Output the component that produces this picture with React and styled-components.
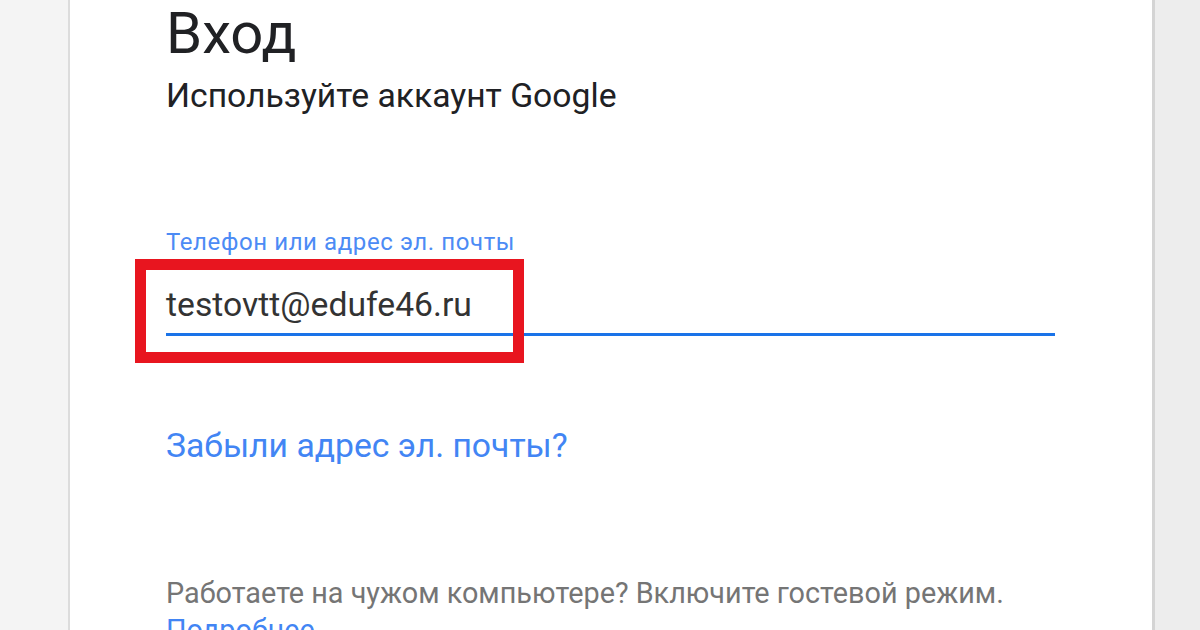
import React from 'react'
import styled, { createGlobalStyle } from 'styled-components'

const GlobalStyle = createGlobalStyle`
  html, body {
    margin: 0;
    height: 100%;
    background: #f1f1f1;
    font-family: Roboto, "Liberation Sans", Arial, sans-serif;
    overflow: hidden;
  }
`

const Page = styled.div`
  display: flex;
  height: 630px;
`

const Gutter = styled.div`
  width: ${p => p.$width}px;
  flex: none;
  background: ${p => p.$bg};
`

const Card = styled.main`
  flex: none;
  width: 1087px;
  box-sizing: border-box;
  background: #fff;
  border-left: 2px solid #dcdcdc;
  border-right: 3px solid #d4d4d4;
  padding: 4px 97px 0 96px;
  overflow: hidden;
`

const Title = styled.h1`
  margin: 0;
  font-size: 58px;
  line-height: 58px;
  font-weight: 400;
  color: #202124;
`

const Subtitle = styled.p`
  margin: 16.6px 0 0;
  font-size: 33.7px;
  line-height: 33.7px;
  color: #202124;
`

const Field = styled.div`
  position: relative;
  margin-top: 117.5px;
`

const Label = styled.label`
  display: block;
  font-size: 24px;
  line-height: 24px;
  letter-spacing: 0.6px;
  color: #4c8bf5;
`

const Value = styled.div`
  margin-top: 33.8px;
  font-size: 33.7px;
  line-height: 33.7px;
  color: #333;
`

const Underline = styled.div`
  margin-top: 11.7px;
  height: 3px;
  background: #1a73e8;
`

const Highlight = styled.div`
  position: absolute;
  left: -31px;
  top: 29px;
  width: 389px;
  height: 104px;
  box-sizing: border-box;
  border: 11px solid #e8151f;
  pointer-events: none;
`

const Link = styled.a`
  display: block;
  margin-top: 92.6px;
  font-size: 33.7px;
  line-height: 33.7px;
  color: #4285f4;
  text-decoration: none;
`

const Note = styled.p`
  margin: 112.3px 0 0;
  font-size: 28.8px;
  line-height: 37px;
  color: #757575;

  a {
    color: #4285f4;
    text-decoration: none;
  }
`

export default function App () {
  return (
    <>
      <GlobalStyle />
      <Page>
        <Gutter $width={68} $bg='#f4f4f4' />
        <Card>
          <Title>Вход</Title>
          <Subtitle>Используйте аккаунт Google</Subtitle>
          <Field>
            <Label>Телефон или адрес эл. почты</Label>
            <Value>testovtt@edufe46.ru</Value>
            <Underline />
            <Highlight />
          </Field>
          <Link href='#'>Забыли адрес эл. почты?</Link>
          <Note>
            Работаете на чужом компьютере? Включите гостевой режим.
            <br />
            <a href='#'>Подробнее</a>
          </Note>
        </Card>
        <Gutter $width={45} $bg='#ededed' />
      </Page>
    </>
  )
}
